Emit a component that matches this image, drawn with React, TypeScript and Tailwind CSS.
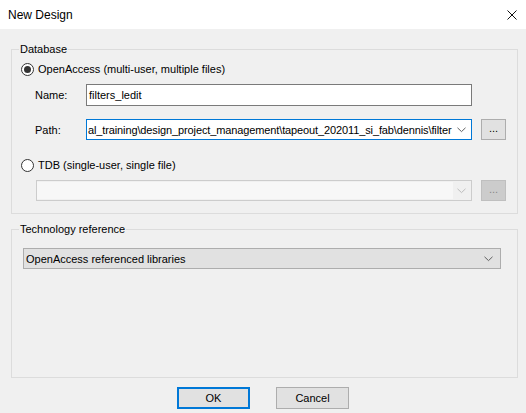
import React from 'react'

const Chevron = ({ color = '#606060' }: { color?: string }) => (
  <svg width="9" height="6" viewBox="0 0 9 6" fill="none" className="shrink-0">
    <polyline points="0.5,0.8 4.5,4.6 8.5,0.8" stroke={color} strokeWidth="1" />
  </svg>
)

const Radio = ({ checked, label }: { checked?: boolean; label: string }) => (
  <div className="flex items-center h-[14px] ml-[9px] gap-[4px]">
    <span className="w-[13px] h-[13px] rounded-full border border-[#333] bg-white flex items-center justify-center">
      {checked && <span className="w-[7px] h-[7px] rounded-full bg-[#333]" />}
    </span>
    <span>{label}</span>
  </div>
)

export default function App() {
  return (
    <div
      className="w-[526px] h-[413px] flex flex-col bg-[#f0f0f0] text-[11px] leading-[14px] text-black overflow-hidden"
      style={{ fontFamily: '"Liberation Sans", Arial, sans-serif' }}>
      {/* Title bar */}
      <div className="h-[29px] bg-white flex items-center justify-between pl-[8px] pr-[9px] shrink-0">
        <span className="text-[12px]">New Design</span>
        <svg width="10" height="10" viewBox="0 0 10 10" fill="none">
          <path d="M0.5 0.5 L9.5 9.5 M9.5 0.5 L0.5 9.5" stroke="#111" strokeWidth="1" />
        </svg>
      </div>

      <div className="flex flex-col pt-[13px] pl-[11px] pr-[8px]">
        {/* Database group */}
        <fieldset className="border border-[#dcdcdc] m-0 p-0 min-w-0">
          <legend className="ml-[7px] px-[1px] leading-[14px]">Database</legend>
          <div className="flex flex-col pb-[12px]">
            <div className="mt-[6px]">
              <Radio checked label="OpenAccess (multi-user, multiple files)" />
            </div>

            <div className="flex items-center mt-[8px] pl-[23px]">
              <span className="w-[51px]">Name:</span>
              <div className="w-[386px] h-[22px] bg-white border border-[#7a7a7a] flex items-center pl-[2px]">
                filters_ledit
              </div>
            </div>

            <div className="flex items-center mt-[13px] pl-[23px]">
              <span className="w-[51px]">Path:</span>
              <div className="w-[386px] h-[21px] bg-white border border-[#0078d7] flex items-center pr-[5px]">
                <div className="flex-1 overflow-hidden whitespace-nowrap pl-[1px] tracking-[-0.12px]">
                  al_training\design_project_management\tapeout_202011_si_fab\dennis\filter
                </div>
                <Chevron />
              </div>
              <button className="ml-[9px] w-[25px] h-[21px] bg-[#e1e1e1] border border-[#adadad] flex items-center justify-center pb-[3px]">
                ...
              </button>
            </div>

            <div className="mt-[18px]">
              <Radio label="TDB (single-user, single file)" />
            </div>

            <div className="flex items-center mt-[8px] pl-[24px]">
              <div className="w-[436px] h-[21px] bg-[#f0f0f0] border border-[#cccccc] flex items-center pr-[5px]">
                <div className="w-[416px] h-[17px] bg-[#f7f7f7]" />
                <div className="flex-1" />
                <Chevron color="#bcbcbc" />
              </div>
              <button className="ml-[9px] w-[25px] h-[21px] bg-[#cccccc] border border-[#bfbfbf] text-[#888] flex items-center justify-center pb-[3px]">
                ...
              </button>
            </div>
          </div>
        </fieldset>

        {/* Technology reference group */}
        <fieldset className="mt-[8px] border border-[#dcdcdc] m-0 p-0 min-w-0">
          <legend className="ml-[7px] px-[1px] leading-[14px]">Technology reference</legend>
          <div className="flex flex-col pb-[108px]">
            <div className="mt-[12px] ml-[11px] w-[478px] h-[21px] bg-[#e1e1e1] border border-[#adadad] flex items-center justify-between pl-[2px] pr-[7px]">
              <span>OpenAccess referenced libraries</span>
              <Chevron />
            </div>
          </div>
        </fieldset>

        {/* Buttons */}
        <div className="flex mt-[9px] pl-[166px] gap-[26px]">
          <button className="w-[73px] h-[22px] bg-[#e1e1e1] border-2 border-[#0078d7]">OK</button>
          <button className="w-[73px] h-[22px] bg-[#e1e1e1] border border-[#adadad]">Cancel</button>
        </div>
      </div>
    </div>
  )
}
